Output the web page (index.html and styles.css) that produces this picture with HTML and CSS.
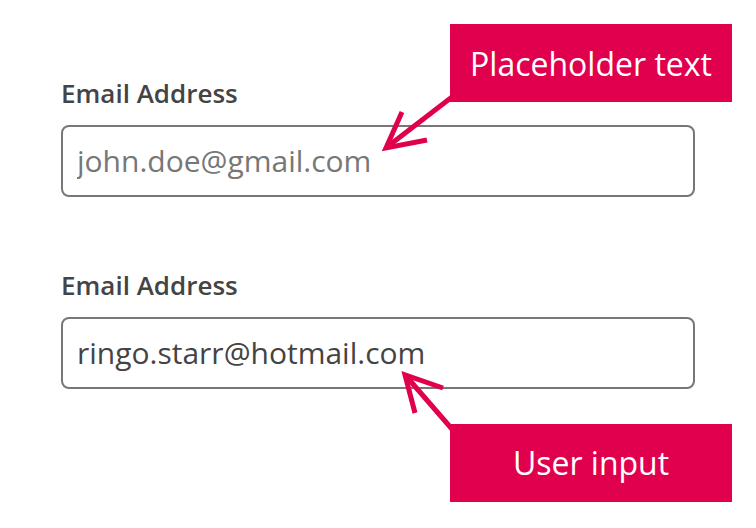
FILE: index.html
```html
<!DOCTYPE html>
<html lang="en">
<head>
<meta charset="utf-8">
<title>Placeholder vs user input</title>
<link rel="stylesheet" href="styles.css">
</head>
<body>
<main class="page">
  <form class="form">
    <div class="field">
      <label class="label" for="email1">Email Address</label>
      <input class="input" id="email1" type="email" placeholder="john.doe@gmail.com">
    </div>
    <div class="field">
      <label class="label" for="email2">Email Address</label>
      <input class="input" id="email2" type="email" value="ringo.starr@hotmail.com">
    </div>
  </form>
  <div class="callout callout-top">Placeholder text</div>
  <div class="callout callout-bottom">User input</div>
  <svg class="arrows" width="756" height="528" viewBox="0 0 756 528">
    <g fill="none" stroke="#e0004d" stroke-width="5" stroke-linejoin="miter" stroke-miterlimit="10">
      <line x1="452" y1="97" x2="387" y2="147"/>
      <polyline points="402,112 386,148 427,140"/>
      <line x1="458" y1="436" x2="406" y2="376"/>
      <polyline points="415,413 405,375 443,388"/>
    </g>
  </svg>
</main>
</body>
</html>
```

FILE: styles.css
```css
html, body {
  margin: 0;
  padding: 0;
  background: #ffffff;
}

body {
  font-family: "Open Sans", "Noto Sans", sans-serif;
  color: #444444;
}

.page {
  position: relative;
  width: 756px;
  height: 528px;
  overflow: hidden;
}

.form {
  display: flex;
  flex-direction: column;
  gap: 71px;
  padding: 76px 0 0 61px;
  margin: 0;
}

.field {
  display: flex;
  flex-direction: column;
  gap: 15px;
}

.label {
  font-size: 26px;
  line-height: 34px;
  font-weight: 600;
  color: #444444;
}

.input {
  box-sizing: border-box;
  width: 634px;
  height: 72px;
  margin: 0;
  padding: 0 14px 2px;
  border: 2px solid #777777;
  border-radius: 8px;
  background: #ffffff;
  font-family: "Open Sans", "Noto Sans", sans-serif;
  font-size: 30px;
  color: #444444;
  outline: none;
}

.input::placeholder {
  color: #777777;
  opacity: 1;
}

.callout {
  position: absolute;
  left: 450px;
  width: 282px;
  height: 78px;
  display: flex;
  align-items: center;
  justify-content: center;
  box-sizing: border-box;
  background: #e0004d;
  color: #ffffff;
  font-size: 32px;
  line-height: 1.362;
}

.callout-top {
  top: 24px;
  padding-top: 1px;
}

.callout-bottom {
  top: 424px;
}

.arrows {
  position: absolute;
  left: 0;
  top: 0;
  pointer-events: none;
}
```
